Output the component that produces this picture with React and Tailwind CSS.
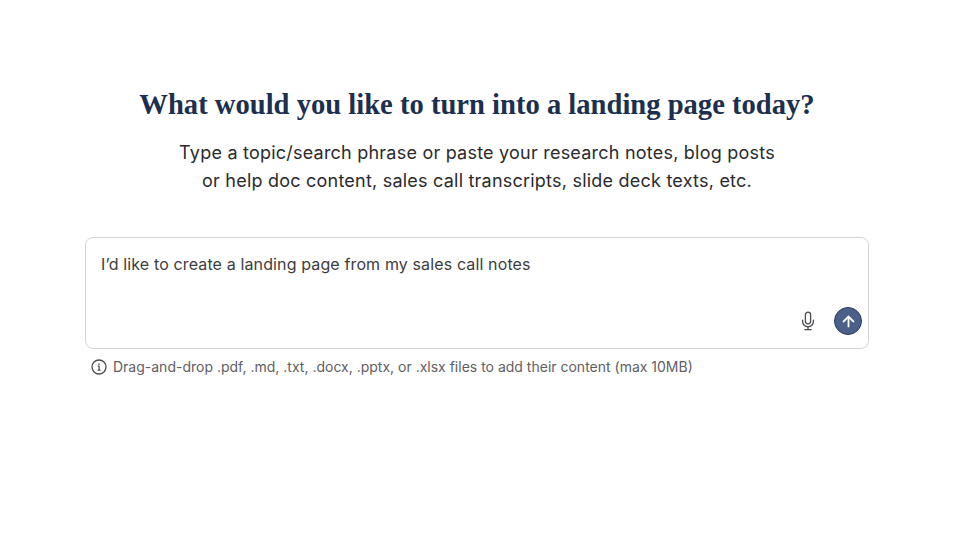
import { ArrowUp } from "lucide-react";

function MicIcon() {
  return (
    <svg width="20" height="20" viewBox="0 0 20 20" fill="none" stroke="#4a4b4f" strokeWidth="1.3" strokeLinecap="round" className="block">
      <rect x="7.4" y="1.2" width="5.2" height="11.6" rx="2.6" />
      <path d="M4.6 9.2v1.2a5.4 5.4 0 0 0 10.8 0V9.2" />
      <path d="M10 15.8v2.6" />
      <path d="M6.8 18.6h6.4" />
    </svg>
  );
}

function InfoIcon() {
  return (
    <svg width="16" height="16" viewBox="0 0 16 16" fill="none" stroke="#4a4b4f" className="block">
      <circle cx="8" cy="8" r="7" strokeWidth="1.3" />
      <path d="M6.8 7.2H8.1V11M6.7 11.1h2.8" strokeWidth="1.2" />
      <path d="M8 4.4v1.3" strokeWidth="1.5" />
    </svg>
  );
}

export default function App() {
  return (
    <div className="min-h-[551px] bg-white flex flex-col items-center pt-[85px] pr-[6px] font-['Inter',sans-serif]">
      <h1 className="font-['Liberation_Serif',serif] font-bold text-[28.6px] leading-[40px] text-[#1c2f4f] text-center">
        What would you like to turn into a landing page today?
      </h1>

      <p className="mt-[14px] text-[18px] leading-[28px] tracking-[0.22px] text-[#2b2b2e] text-center">
        Type a topic/search phrase or paste your research notes, blog posts
        <br />
        or help doc content, sales call transcripts, slide deck texts, etc.
      </p>

      <div className="mt-[42px] w-[784px]">
        <div className="h-[112px] rounded-[8px] border border-[#d4d4d6] flex flex-col justify-between pl-[15px] pr-[6px] pt-[14px] pb-[13px]">
          <div className="text-[16px] leading-[24px] tracking-[0.13px] text-[#3d3d40]">
            I’d like to create a landing page from my sales call notes
          </div>
          <div className="flex items-center justify-end gap-[16px]">
            <MicIcon />
            <div className="w-[28px] h-[28px] rounded-full bg-[#4a6089] border border-[#2c3e5e] flex items-center justify-center">
              <ArrowUp className="w-[17px] h-[17px] text-white" strokeWidth={2.5} />
            </div>
          </div>
        </div>

        <div className="mt-[8px] ml-[6px] flex items-center gap-[6px] text-[14px] leading-[20px] text-[#5f6064]">
          <InfoIcon />
          <span>Drag-and-drop .pdf, .md, .txt, .docx, .pptx, or .xlsx files to add their content (max 10MB)</span>
        </div>
      </div>
    </div>
  );
}
